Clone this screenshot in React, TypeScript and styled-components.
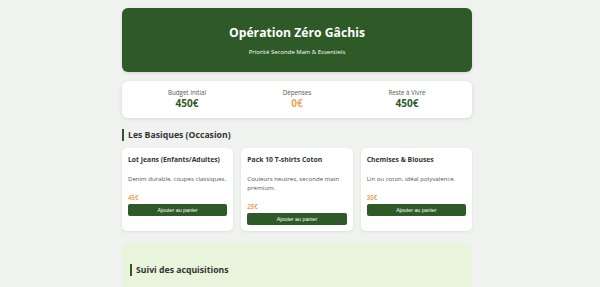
import styled, { createGlobalStyle } from 'styled-components';

const GlobalStyle = createGlobalStyle`
  html, body {
    margin: 0;
    padding: 0;
    background: #f0f2ef;
  }
  body {
    font-family: "Open Sans", "Noto Sans", sans-serif;
    color: #333;
    padding-right: 6px;
  }
`;

const products = [
  { name: 'Lot Jeans (Enfants/Adultes)', desc: 'Denim durable, coupes classiques.', price: 45 },
  { name: 'Pack 10 T-shirts Coton', desc: 'Couleurs neutres, seconde main premium.', price: 25 },
  { name: 'Chemises & Blouses', desc: 'Lin ou coton, idéal polyvalence.', price: 35 },
];

export default function App() {
  return (
    <>
      <GlobalStyle />
      <Page>
        <Header>
          <Title>Opération Zéro Gâchis</Title>
          <Subtitle>Priorité Seconde Main &amp; Essentiels</Subtitle>
        </Header>

        <Stats>
          <Stat>
            <StatLabel>Budget Initial</StatLabel>
            <StatValue>450€</StatValue>
          </Stat>
          <Stat>
            <StatLabel>Dépenses</StatLabel>
            <StatValue $orange>0€</StatValue>
          </Stat>
          <Stat>
            <StatLabel>Reste à Vivre</StatLabel>
            <StatValue>450€</StatValue>
          </Stat>
        </Stats>

        <SectionTitle>Les Basiques (Occasion)</SectionTitle>
        <Grid>
          {products.map((p) => (
            <Card key={p.name}>
              <CardTitle>{p.name}</CardTitle>
              <CardDesc>{p.desc}</CardDesc>
              <Price>{p.price}€</Price>
              <AddButton>Ajouter au panier</AddButton>
            </Card>
          ))}
        </Grid>

        <Tracking>
          <SectionTitle>Suivi des acquisitions</SectionTitle>
        </Tracking>
      </Page>
    </>
  );
}

const Page = styled.div`
  width: 350px;
  margin: 0 auto;
  padding: 8px 0 0;
`;

const Header = styled.header`
  background: #2d5a27;
  color: #fff;
  border-radius: 6px;
  height: 64px;
  display: flex;
  flex-direction: column;
  align-items: center;
  justify-content: center;
  box-shadow: 0 1px 3px rgba(0, 0, 0, 0.12);
`;

const Title = styled.h1`
  margin: 2px 0 9px;
  font-size: 12.2px;
  font-weight: 700;
  line-height: 1.2;
`;

const Subtitle = styled.p`
  margin: 0;
  font-size: 6px;
  line-height: 1.2;
`;

const Stats = styled.div`
  margin-top: 9px;
  background: #fff;
  border-radius: 6px;
  box-shadow: 0 1px 4px rgba(0, 0, 0, 0.1);
  height: 37px;
  padding: 0 10px;
  display: grid;
  grid-template-columns: repeat(3, 1fr);
  align-items: center;
`;

const Stat = styled.div`
  text-align: center;
`;

const StatLabel = styled.div`
  font-size: 6.2px;
  color: #555;
  line-height: 1.4;
`;

const StatValue = styled.div<{ $orange?: boolean }>`
  font-size: 10px;
  font-weight: 700;
  line-height: 1.3;
  color: ${(p) => (p.$orange ? '#f4a261' : '#2d5a27')};
`;

const SectionTitle = styled.h2`
  margin: 11px 0 0;
  font-size: 8.7px;
  font-weight: 700;
  color: #333;
  border-left: 2px solid #2d5a27;
  padding-left: 4px;
  line-height: 12px;
`;

const Grid = styled.div`
  margin-top: 7px;
  display: grid;
  grid-template-columns: repeat(3, 1fr);
  gap: 8px;
`;

const Card = styled.div`
  background: #fff;
  border-radius: 5px;
  box-shadow: 0 1px 3px rgba(0, 0, 0, 0.08);
  padding: 6px 6px 6px;
`;

const CardTitle = styled.h3`
  margin: 0;
  font-size: 6.8px;
  font-weight: 700;
  color: #333;
  line-height: 11px;
  white-space: nowrap;
`;

const CardDesc = styled.p`
  margin: 8.5px 0 0;
  font-size: 6.1px;
  color: #555;
  line-height: 9px;
`;

const Price = styled.div`
  margin-top: 10px;
  font-size: 6.1px;
  font-weight: 700;
  color: #f4a261;
  line-height: 9px;
`;

const AddButton = styled.button`
  display: block;
  margin-top: 2.5px;
  width: 100%;
  height: 12px;
  padding: 0;
  border: none;
  border-radius: 2px;
  background: #2d5a27;
  color: #fff;
  font-family: "Liberation Sans", Arial, sans-serif;
  font-size: 5.3px;
`;

const Tracking = styled.section`
  margin-top: 12px;
  background: #e8f5dc;
  border-radius: 6px;
  padding: 10px 8px 40px;
`;
